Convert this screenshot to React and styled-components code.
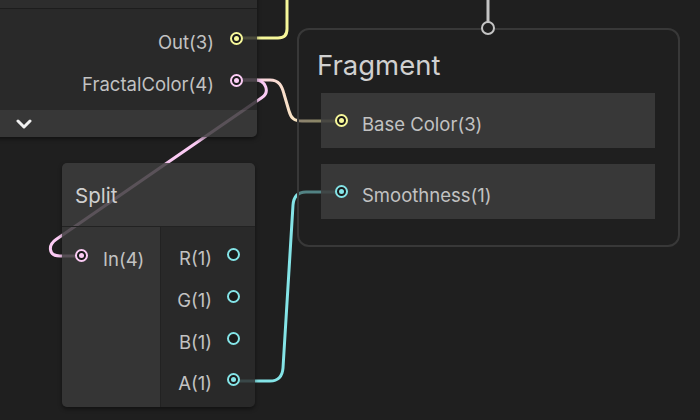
import React from 'react';
import styled, { createGlobalStyle } from 'styled-components';

const COLORS = {
  vec3: '#f6f79a',
  vec4: '#fbcbf4',
  float: '#84e4e7',
  flow: '#c4c4c4',
};

const GlobalStyle = createGlobalStyle`
  html, body {
    margin: 0;
    padding: 0;
    background: #1f1f1f;
    overflow: hidden;
  }
  body {
    font-family: Inter, "Noto Sans", "Liberation Sans", sans-serif;
  }
`;

const Canvas = styled.div`
  position: relative;
  width: 700px;
  height: 420px;
  overflow: hidden;
  background: #1f1f1f;
`;

const Wires = styled.svg`
  position: absolute;
  left: 0;
  top: 0;
  z-index: 0;
`;

const Node = styled.div`
  position: absolute;
  z-index: 1;
  left: ${(p) => p.$x}px;
  top: ${(p) => p.$y}px;
  width: ${(p) => p.$w}px;
  display: flex;
  flex-direction: column;
  border-radius: 5px;
  overflow: hidden;
  box-shadow: 0 2px 4px rgba(0, 0, 0, 0.45);
`;

const NodeCap = styled.div`
  height: 48px;
  background: rgba(48, 48, 48, 0.85);
  border-bottom: 1px solid #1d1d1d;
`;

const NodeBody = styled.div`
  display: flex;
  flex-direction: column;
  padding: 8px 0 9px;
  background: rgba(44, 44, 44, 0.85);
`;

const CollapseBar = styled.div`
  height: 27px;
  display: flex;
  align-items: center;
  padding-left: 24px;
  background: rgba(60, 60, 60, 0.85);
`;

const SplitHeader = styled.div`
  height: 64px;
  display: flex;
  align-items: center;
  padding: 2px 0 0 13px;
  box-sizing: border-box;
  background: rgba(61, 61, 61, 0.85);
  border-bottom: 1px solid #222;
  color: #cfcfcf;
  font-size: 20.5px;
`;

const SplitBody = styled.div`
  height: 180px;
  display: flex;
`;

const Column = styled.div`
  display: flex;
  flex-direction: column;
  padding-top: 7px;
  width: ${(p) => p.$w}px;
  background: ${(p) => p.$bg};
  border-right: ${(p) => (p.$divider ? '1px solid #222' : 'none')};
`;

const PortRow = styled.div`
  height: ${(p) => p.$h || 42}px;
  display: flex;
  align-items: center;
  justify-content: ${(p) => (p.$out ? 'flex-end' : 'flex-start')};
  gap: ${(p) => p.$gap || 15}px;
  padding: ${(p) => (p.$out ? `0 ${p.$pad}px 0 0` : `0 0 0 ${p.$pad}px`)};
  color: #c2c2c2;
  font-size: 18.5px;
  white-space: nowrap;
`;

const Label = styled.span`
  padding-top: 7px;
  line-height: 22px;
`;

const Port = styled.span`
  position: relative;
  flex: none;
  box-sizing: border-box;
  width: 13px;
  height: 13px;
  border-radius: 50%;
  border: 2px solid ${(p) => p.$color};
  background: #1b1b1b;

  &::after {
    content: '';
    display: ${(p) => (p.$linked ? 'block' : 'none')};
    position: absolute;
    left: 50%;
    top: 50%;
    width: 5px;
    height: 5px;
    margin: -2.5px 0 0 -2.5px;
    border-radius: 50%;
    background: ${(p) => p.$color};
  }
`;

const Context = styled.div`
  position: absolute;
  z-index: 1;
  left: 297px;
  top: 28px;
  width: 383px;
  height: 219px;
  box-sizing: border-box;
  border: 2px solid #383838;
  border-radius: 12px;
  background: rgba(31, 31, 31, 0.5);
  display: flex;
  flex-direction: column;
  padding: 0 23px 0 22px;
`;

const ContextTitle = styled.div`
  height: 63px;
  display: flex;
  align-items: center;
  padding-top: 6px;
  margin-left: -4px;
  box-sizing: border-box;
  color: #d0d0d0;
  font-size: 27.5px;
`;

const Blocks = styled.div`
  display: flex;
  flex-direction: column;
  gap: 16px;
`;

const Block = styled.div`
  height: 55px;
  display: flex;
  align-items: center;
  gap: 14px;
  padding-left: 14px;
  background: rgba(61, 61, 61, 0.85);
  color: #c2c2c2;
  font-size: 18.5px;
`;

const FlowPort = styled.span`
  position: absolute;
  left: 182px;
  top: -9px;
  width: 14px;
  height: 14px;
  box-sizing: border-box;
  border-radius: 50%;
  border: 2px solid ${COLORS.flow};
  background: #1f1f1f;
`;

const Chevron = () => (
  <svg width="16" height="10" viewBox="0 0 16 10">
    <polyline points="2,2 8,8 14,2" fill="none" stroke="#f0f0f0" strokeWidth="3" strokeLinecap="round" strokeLinejoin="round" />
  </svg>
);

const splitOutputs = ['R(1)', 'G(1)', 'B(1)', 'A(1)'];

export default function App() {
  return (
    <>
      <GlobalStyle />
      <Canvas>
        <Wires width="700" height="420" viewBox="0 0 700 420">
          <defs>
            <linearGradient id="fracBase" gradientUnits="userSpaceOnUse" x1="236" y1="0" x2="342" y2="0">
              <stop offset="0" stopColor={COLORS.vec4} />
              <stop offset="1" stopColor={COLORS.vec3} />
            </linearGradient>
          </defs>
          <g fill="none" strokeWidth="3" strokeLinecap="round">
            <path d="M488 -2 V22" stroke={COLORS.flow} />
            <path d="M236 38 H278 Q287 38 287 29 V-2" stroke={COLORS.vec3} />
            <path d="M236 80 H270 C279 80 282 86 284 94 L289 111 C291 118 294 121 302 121 H342" stroke="url(#fracBase)" />
            <path d="M236 80 H255 C266 80 270 92 262 97.5 L56 239.5 C48 245 48 256 60 256 H82" stroke={COLORS.vec4} />
            <path d="M233 381 H270 Q282 381 283 368 L293 205 Q294 192 306 192 H342" stroke={COLORS.float} />
          </g>
        </Wires>

        <Node $x={-8} $y={-40} $w={265}>
          <NodeCap />
          <NodeBody>
            <PortRow $out $pad={14} $gap={16}>
              <Label>Out(3)</Label>
              <Port $color={COLORS.vec3} $linked />
            </PortRow>
            <PortRow $out $pad={14} $gap={16}>
              <Label>FractalColor(4)</Label>
              <Port $color={COLORS.vec4} $linked />
            </PortRow>
          </NodeBody>
          <CollapseBar>
            <Chevron />
          </CollapseBar>
        </Node>

        <Node $x={62} $y={163} $w={193}>
          <SplitHeader>Split</SplitHeader>
          <SplitBody>
            <Column $w={99} $bg="rgba(58, 58, 58, 0.85)" $divider>
              <PortRow $pad={13} $gap={15}>
                <Port $color={COLORS.vec4} $linked />
                <Label>In(4)</Label>
              </PortRow>
            </Column>
            <Column $w={94} $bg="rgba(44, 44, 44, 0.85)">
              {splitOutputs.map((label, i) => (
                <PortRow key={label} $out $pad={15} $gap={15} $h={41.7}>
                  <Label>{label}</Label>
                  <Port $color={COLORS.float} $linked={i === 3} />
                </PortRow>
              ))}
            </Column>
          </SplitBody>
        </Node>

        <Context>
          <FlowPort />
          <ContextTitle>Fragment</ContextTitle>
          <Blocks>
            <Block>
              <Port $color={COLORS.vec3} $linked />
              <Label>Base Color(3)</Label>
            </Block>
            <Block>
              <Port $color={COLORS.float} $linked />
              <Label>Smoothness(1)</Label>
            </Block>
          </Blocks>
        </Context>
      </Canvas>
    </>
  );
}
